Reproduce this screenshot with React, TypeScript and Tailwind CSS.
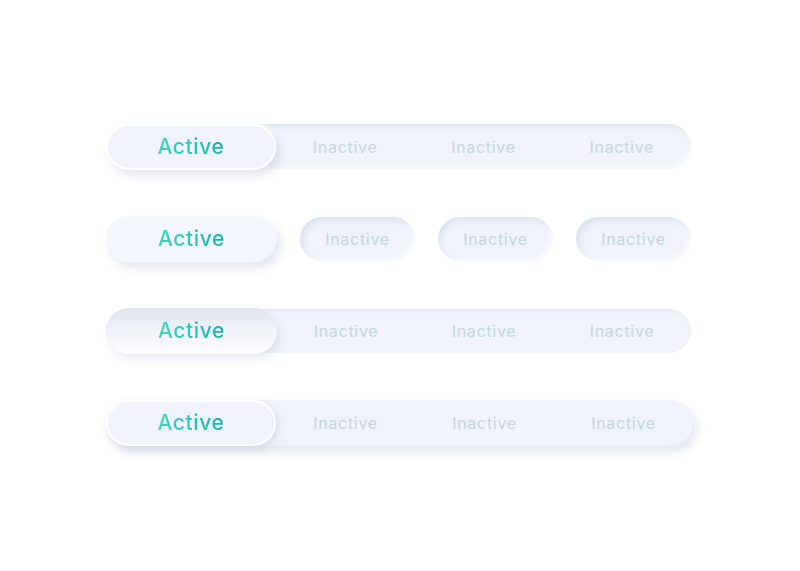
const tabs = ["Inactive", "Inactive", "Inactive"];

const font = "font-['Inter','Liberation_Sans',sans-serif]";

function ActiveLabel() {
    return (
        <span
            className={`${font} bg-gradient-to-r from-[#3dd6c4] to-[#14b2ae] bg-clip-text text-[21px] font-medium tracking-[0.6px] text-transparent`}
        >
            Active
        </span>
    );
}

function InactiveLabel() {
    return (
        <span className={`${font} text-[16px] font-normal tracking-[0.7px] text-[#c6d7e0]`}>
            Inactive
        </span>
    );
}

// Inset track with a raised active pill
function SunkenTabs() {
    return (
        <div className="flex h-[45px] w-[585px] items-center rounded-full bg-[#f0f3fa] shadow-[inset_2px_3px_5px_rgba(185,196,218,0.3),inset_-2px_-2px_4px_rgba(255,255,255,0.7)]">
            <div className="flex h-[46px] w-[170px] shrink-0 items-center justify-center rounded-full border-2 border-white bg-[#f0f3fb] shadow-[4px_6px_10px_rgba(175,187,210,0.35),-3px_-3px_8px_rgba(255,255,255,0.9)]">
                <ActiveLabel />
            </div>
            {tabs.map((t, i) => (
                <div key={i} className="flex flex-1 justify-center">
                    <InactiveLabel />
                </div>
            ))}
        </div>
    );
}

// Separate pills, inactive ones pressed in
function PillTabs() {
    return (
        <div className="flex w-[585px] items-center gap-[23px]">
            <div className="flex h-[46px] w-[171px] shrink-0 items-center justify-center rounded-full bg-[#f3f6fc] shadow-[4px_6px_10px_rgba(175,187,210,0.35),-3px_-3px_8px_rgba(255,255,255,0.9)]">
                <ActiveLabel />
            </div>
            {tabs.map((t, i) => (
                <div
                    key={i}
                    className="flex h-[44px] flex-1 items-center justify-center rounded-full bg-[#f0f3fa] shadow-[inset_3px_3px_6px_rgba(180,192,215,0.35),inset_-2px_-2px_4px_rgba(255,255,255,0.9)]"
                >
                    <InactiveLabel />
                </div>
            ))}
        </div>
    );
}

// Flat track with a concave active pill
function ConcaveTabs() {
    return (
        <div className="flex h-[44px] w-[585px] items-center rounded-full bg-[#f0f3fa] shadow-[inset_1px_2px_3px_rgba(195,205,225,0.25)]">
            <div className="flex h-[46px] w-[171px] shrink-0 items-center justify-center rounded-full bg-gradient-to-b from-[#dfe5ef] via-[#eff2f8] to-[#fdfdff] shadow-[3px_5px_9px_rgba(175,187,210,0.3)]">
                <ActiveLabel />
            </div>
            {tabs.map((t, i) => (
                <div key={i} className="flex flex-1 justify-center">
                    <InactiveLabel />
                </div>
            ))}
        </div>
    );
}

// Raised track with a raised active pill
function RaisedTabs() {
    return (
        <div className="flex h-[46px] w-[587px] items-center rounded-full bg-[#f0f3fa] shadow-[4px_6px_10px_rgba(175,187,210,0.35),-3px_-3px_8px_rgba(255,255,255,0.9)]">
            <div className="flex h-[46px] w-[170px] shrink-0 items-center justify-center rounded-full border-2 border-white bg-[#f0f3fb] shadow-[3px_4px_8px_rgba(175,187,210,0.35)]">
                <ActiveLabel />
            </div>
            {tabs.map((t, i) => (
                <div key={i} className="flex flex-1 justify-center">
                    <InactiveLabel />
                </div>
            ))}
        </div>
    );
}

export default function App() {
    return (
        <div className="h-[571px] w-[800px] overflow-hidden bg-white pl-[106px] pt-[124px]">
            <div className="flex flex-col gap-[47px]">
                <SunkenTabs />
                <PillTabs />
                <ConcaveTabs />
                <RaisedTabs />
            </div>
        </div>
    );
}
